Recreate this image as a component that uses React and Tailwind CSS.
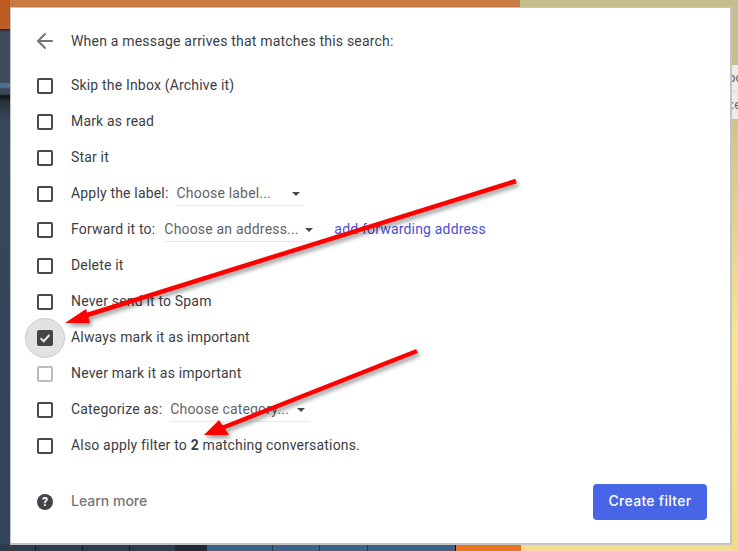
import { ArrowLeft } from 'lucide-react';

const Checkbox = ({ checked, muted }) => {
  if (checked) {
    return (
      <div className="w-[40px] h-[40px] -ml-[12px] -mr-[12px] shrink-0 translate-y-[1px] rounded-full bg-[#e2e2e2] border border-[#cbcbcb] flex items-center justify-center">
        <div className="w-[16px] h-[16px] rounded-[2px] bg-[#444444] flex items-center justify-center">
          <svg width="12" height="12" viewBox="0 0 12 12" fill="none">
            <path d="M1.6 6.2 L4.7 9.2 L10.4 3" stroke="#e8e8e8" strokeWidth="2" />
          </svg>
        </div>
      </div>
    );
  }
  return (
    <div
      className={`w-[16px] h-[16px] shrink-0 translate-y-[1px] rounded-[2px] border-2 ${muted ? 'border-[#bcbcbc]' : 'border-[#4a4a4a]'}`}
    />
  );
};

const Select = ({ text, width, pad }) => (
  <div
    className="h-[24px] mt-[2px] flex items-center justify-between border-b border-[#e8e8e8] text-[#5f6368]"
    style={{ width, paddingRight: pad }}
  >
    <span>{text}</span>
    <svg width="8" height="4" viewBox="0 0 8 4">
      <path d="M0 0 H8 L4 4 Z" fill="#4a4a4a" />
    </svg>
  </div>
);

const Row = ({ checked, muted, children }) => (
  <div className="h-[36px] flex items-center">
    <Checkbox checked={checked} muted={muted} />
    <div className="ml-[18px] flex items-center text-[#3c4043]">{children}</div>
  </div>
);

const App = () => {
  return (
    <div className="relative w-[738px] h-[551px] overflow-hidden flex pl-[10px] pt-[7px] pb-[6px] font-['Roboto',sans-serif] text-[14px] tracking-[0.18px] bg-[linear-gradient(to_right,#bd5c20_0,#bd5c20_10px,#c97b44_10px,#c97b44_520px,#c4bd8e_520px,#c4bd8e_738px)]">
      {/* Wallpaper bands around the dialog */}
      <div className="absolute left-0 top-[29px] bottom-0 w-[10px] bg-[linear-gradient(to_bottom,#20242a_0,#3d4b5b_3px,#3d4b5b_53px,#4f7394_55px,#4f7394_58px,#3a4858_60px,#3a4858_65px,#0c1014_67px,#26303a_72px,#36475a_90px,#33465c_100%)]" />
      <div className="absolute left-0 right-0 bottom-0 h-[7px] bg-[linear-gradient(to_right,#2b3c4f_0,#2b3c4f_35px,#141c26_35px,#141c26_36px,#2b3c4f_36px,#2b3c4f_82px,#141c26_82px,#141c26_83px,#2b3c4f_83px,#2b3c4f_129px,#141c26_129px,#141c26_130px,#2b3c4f_130px,#2b3c4f_175px,#1f2a38_175px,#1f2a38_207px,#3d6088_207px,#3d6088_272px,#22364e_272px,#22364e_273px,#3d6088_273px,#3d6088_319px,#22364e_319px,#22364e_320px,#3d6088_320px,#3d6088_367px,#22364e_367px,#22364e_368px,#3d6088_368px,#3d6088_455px,#101418_455px,#101418_456px,#e8741f_456px,#e8741f_521px,#f2dc90_521px,#f2dc90_738px)]" />
      <div className="absolute right-0 top-[60px] bottom-0 w-[6px] bg-[linear-gradient(to_bottom,#c4bd8e_0,#d8cd8c_120px,#f4e596_280px,#eedc8c_100%)]" />

      {/* Dialog */}
      <div className="relative w-[722px] h-[538px] shrink-0 bg-white border-r-2 border-b-2 border-t border-l border-[#c4c4c4] flex flex-col pl-[26px] pr-[23px]">
        <div className="h-[36px] mt-[15px] flex items-center text-[#3c4043]">
          <ArrowLeft size={24} strokeWidth={2} className="text-[#757575] -ml-[4px] mr-[14px]" />
          <span className="tracking-[0.2px]">When a message arrives that matches this search:</span>
        </div>
        <div className="mt-[8px] flex flex-col">
          <Row>Skip the Inbox (Archive it)</Row>
          <Row>Mark as read</Row>
          <Row>Star it</Row>
          <Row>
            <span className="mr-[8px]">Apply the label:</span>
            <Select text="Choose label..." width="127px" pad="4px" />
          </Row>
          <Row>
            <span className="mr-[9px]">Forward it to:</span>
            <Select text="Choose an address..." width="154px" pad="5px" />
            <a className="ml-[16px] text-[#4b50cf]">add forwarding address</a>
          </Row>
          <Row>Delete it</Row>
          <Row>Never send it to Spam</Row>
          <Row checked>Always mark it as important</Row>
          <Row muted>Never mark it as important</Row>
          <Row>
            <span className="mr-[8px]">Categorize as:</span>
            <Select text="Choose category..." width="140px" pad="5px" />
          </Row>
          <Row>
            Also apply filter to&nbsp;<b className="font-bold">2</b>&nbsp;matching conversations.
          </Row>
        </div>
        <div className="mt-[21px] flex items-center justify-between">
          <div className="flex items-center">
            <div className="w-[16px] h-[16px] rounded-full bg-[#444444] flex items-center justify-center text-white text-[12px] font-bold leading-none">
              ?
            </div>
            <span className="ml-[18px] -translate-y-[2px] font-['Inter',sans-serif] font-medium text-[#757575] text-[14px] tracking-normal">Learn more</span>
          </div>
          <button className="w-[114px] h-[36px] pb-[3px] rounded-[4px] bg-[#4765e6] text-white font-['Inter',sans-serif] font-medium text-[14px] tracking-[0.3px]">
            Create filter
          </button>
        </div>
      </div>

      {/* Sliver of the list behind the dialog */}
      <div className="relative z-10 w-[6px] shrink-0 overflow-hidden pt-[58px] text-[#5f6368] text-[13px] leading-[26px]">
        <div className="h-[27px] bg-[#ecece8] border-b border-[#dcdcd8] whitespace-nowrap -indent-[4px]">oc</div>
        <div className="h-[27px] bg-[#ecece8] whitespace-nowrap -indent-[1px]">:e</div>
      </div>

      {/* Annotation arrows */}
      <svg className="absolute inset-0 pointer-events-none" width="738" height="551" style={{ filter: 'drop-shadow(2px 3px 2px rgba(0,0,0,0.4))' }}>
        <path d="M516 181 L84 316" stroke="#ff0000" strokeWidth="4.5" fill="none" />
        <path d="M65 323 L86 309 L90 323 Z" fill="#ff0000" />
        <path d="M417 351 L222 428" stroke="#ff0000" strokeWidth="4.5" fill="none" />
        <path d="M204 435 L219 420 L229 435 Z" fill="#ff0000" />
      </svg>
    </div>
  );
};

export default App;
